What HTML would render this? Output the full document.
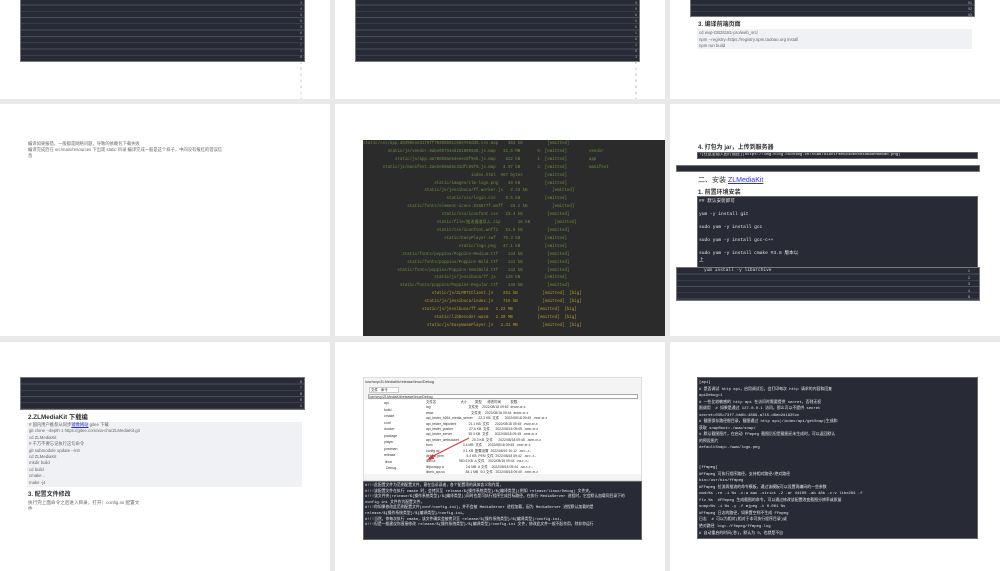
<!DOCTYPE html>
<html><head><meta charset="utf-8"><style>
*{margin:0;padding:0;box-sizing:border-box}
body{width:1000px;height:571px;background:#e9e9e9;position:relative;overflow:hidden;font-family:"Liberation Sans","Noto Sans CJK SC",sans-serif;color:#444}
.p{position:absolute;background:#fff;overflow:hidden}
.a{position:absolute}
.dk{position:absolute;background:#282a36;background-image:repeating-linear-gradient(to bottom,transparent 0 5.5px,#4a4d5e 5.5px 6.3px);border:1px solid #777}
.dk2{position:absolute;background:#282a36;border:1px solid #666;color:#e8e8e8;font-family:"Liberation Mono","Noto Sans CJK SC",monospace;font-size:4.6px;line-height:6.5px;padding:2px 1px;white-space:pre;overflow:hidden}
.h{font-weight:bold;color:#333;font-size:6px;white-space:nowrap}
.t{font-size:4.3px;color:#666;white-space:nowrap}
.ln{position:absolute;font-size:3.5px;color:#aaa;line-height:6px;text-align:right;width:14px}
.term{position:absolute;background:#2b2b2b;font-family:"Liberation Mono",monospace;font-size:4.1px;line-height:7.9px;color:#6a8f3c;white-space:pre;overflow:hidden;padding-top:1px}
.term .y{color:#b59a2c}
</style></head><body>

<!-- row 1 -->
<div class="p" style="left:0;top:0;width:330px;height:99px">
 <div class="dk" style="left:20px;top:-2px;width:285px;height:64px"></div>
 <div class="ln" style="left:288px;top:0">3<br>4<br>3<br>5<br>3<br>6<br>3<br>7<br>3<br>8<br>3<br>9<br>4<br>0<br>4<br>1<br>4</div>
</div>
<div class="p" style="left:335px;top:0;width:330px;height:99px">
 <div class="dk" style="left:20px;top:-2px;width:285px;height:64px"></div>
 <div class="ln" style="left:288px;top:0">5<br>9<br>6<br>0<br>6<br>1<br>6<br>2<br>6<br>3<br>6<br>4<br>6<br>5<br>6<br>6<br>6</div>
</div>
<div class="p" style="left:670px;top:0;width:330px;height:99px">
 <div class="dk" style="left:20px;top:-2px;width:285px;height:19px"></div>
 <div class="ln" style="left:288px;top:0;color:#bbb">91<br>92<br>93</div>
 <div class="a h" style="left:28px;top:19px">3. 编译前端页面</div>
 <div class="a" style="left:27px;top:29px;width:275px;height:20px;background:#f0f1f4"></div>
 <div class="a t" style="left:29px;top:30px;line-height:6.5px">cd wvp-GB28181-pro/web_src/<br>npm --registry=https://registry.npm.taobao.org install<br>npm run build</div>
</div>

<!-- row 2 -->
<div class="p" style="left:0;top:104px;width:330px;height:232px">
 <div class="a t" style="left:28px;top:37px;line-height:6px">编译如果报错，一般都是网络问题，导致的依赖包下载失败<br>编译完成后在 src/main/resources 下出现 static 目录 编译完成一般是这个样子，中间没有报红的错误信<br>息</div>
</div>
<div class="p" style="left:335px;top:104px;width:330px;height:232px">
 <div class="term" style="left:28px;top:36px;width:302px;height:197px">static/css/app.d8399ese3170ff70306b91c69e7e6dd5.css.map    383 kB          [emitted]
          static/js/vendor.9abe9b734ed251809936.js.map   11.6 MB       0  [emitted]         vendor
             static/js/app.aa786b9ae54eeec8f9eb.js.map    822 kB       1  [emitted]         app
        static/js/manifest.2ae2e69a85c33dfc65f0.js.map   4.97 kB       2  [emitted]         manifest
                                            index.html  967 bytes         [emitted]
                             static/images/zlm-logo.png    49 kB          [emitted]
                         static/js/jessibuca/ff.worker.js   2.43 kB          [emitted]
                                  static/css/login.css    8.5 kB          [emitted]
                  static/fonts/element-icons.535877f.woff   28.2 kB          [emitted]
                                static/css/iconfont.css   23.4 kB          [emitted]
                              static/file/推流通道导入.zip       18 kB          [emitted]
                              static/css/iconfont.woff2   51.8 kB          [emitted]
                                 static/EasyPlayer.swf   75.3 kB          [emitted]
                                       static/logo.png   47.1 kB          [emitted]
                static/fonts/poppins/Poppins-Medium.ttf    144 kB          [emitted]
                  static/fonts/poppins/Poppins-Bold.ttf    141 kB          [emitted]
              static/fonts/poppins/Poppins-SemiBold.ttf    142 kB          [emitted]
                             static/js/jessibuca/ff.js    125 kB          [emitted]
               static/fonts/poppins/Poppins-Regular.ttf    145 kB          [emitted]
<span class="y">                            static/js/ZLMRTCClient.js    251 kB          [emitted]  [big]
                         static/js/jessibuca/index.js    715 kB          [emitted]  [big]
                        static/js/jessibuca/ff.wasm   1.22 MB          [emitted]  [big]
                             static/libDecoder.wasm   2.39 MB          [emitted]  [big]
                          static/js/EasyWasmPlayer.js   2.31 MB          [emitted]  [big]</span></div>
</div>
<div class="p" style="left:670px;top:104px;width:330px;height:232px">
 <div class="a h" style="left:28px;top:38px">4. 打包为 jar，上传到服务器</div>
 <div class="dk2" style="left:27px;top:48px;width:281px;height:7px;padding:0 1px;line-height:5px;font-size:4px">![在这里插入图片描述](https://img-blog.csdnimg.cn/55ab7818c1fa05840ec804d6ab0686ab.png)</div>
 <div class="dk" style="left:6px;top:61px;width:304px;height:7px"></div>
 <div class="a h" style="left:28px;top:71px;font-weight:normal;font-size:7px">二、安装 <span style="color:#3030d0;text-decoration:underline">ZLMediaKit</span></div>
 <div class="a h" style="left:28px;top:83px">1. 前置环境安装</div>
 <div class="dk2" style="left:27px;top:92px;width:281px;height:72px;line-height:6.5px">## 默认安装即可

yum -y install git

sudo yum -y install gcc

sudo yum -y install gcc-c++

sudo yum -y install cmake #3.8 版本以
上
</div>
 <div class="dk" style="left:6px;top:163px;width:304px;height:34px"></div>
 <div class="a" style="left:34px;top:164px;font-family:'Liberation Mono',monospace;font-size:4.5px;color:#ddd">yum install -y libarchive</div>
 <div class="ln" style="left:286px;top:164px;line-height:6.6px;color:#ccc">1<br>2<br>3<br>4<br>5</div>
</div>

<!-- row 3 -->
<div class="p" style="left:0;top:342px;width:330px;height:229px">
 <div class="dk" style="left:20px;top:35px;width:285px;height:33px"></div>
 <div class="ln" style="left:288px;top:37px;color:#ccc">6<br>7<br>8<br>9<br>1</div>
 <div class="a h" style="left:28px;top:70px;font-size:6.3px">2.ZLMediaKit 下载编</div>
 <div class="a" style="left:27px;top:80px;width:275px;height:65px;background:#f0f1f4"></div>
 <div class="a t" style="left:29px;top:80px;line-height:6.4px"># 国内用户推荐从同步<span style="color:#3030d0;text-decoration:underline">镜像网站</span> gitee 下载<br>git clone --depth 1 https://gitee.com/xia-chu/ZLMediaKit.git<br>cd ZLMediaKit<br># 千万不要忘记执行这句命令<br>git submodule update --init<br>cd ZLMediaKit<br>mkdir build<br>cd build<br>cmake ..<br> make -j4</div>
 <div class="a h" style="left:28px;top:147px">3. 配置文件修改</div>
 <div class="a t" style="left:28px;top:158px;line-height:6px;font-size:4.6px">执行完上面命令之后进入目录，打开：config.ini 配置文<br>件</div>
</div>
<div class="p" style="left:335px;top:342px;width:330px;height:229px">
 <div class="a" style="left:28px;top:35px;width:279px;height:104px;background:#f4f4f4;border:1px solid #ddd;font-size:3.8px;color:#333;overflow:hidden">
  <div style="padding:2px 1px">/usr/wvp/ZLMediaKit/release/linux/Debug</div>
  <div style="margin:1px 5px;width:30px;height:6px;border:1px solid #ccc;background:#fff;font-size:3.5px">&nbsp;文件&nbsp;&nbsp;&nbsp;命令</div>
  <div style="margin:1px 4px;height:5px;background:#fff;border:1px solid #aaa;width:270px;font-size:3.5px">/usr/wvp/ZLMediaKit/release/linux/Debug</div>
  <div style="display:flex;margin-top:1px">
   <div style="width:58px;height:74px;background:#fff;line-height:6.5px;padding-left:20px;font-size:3.5px">api<br>build<br>cmake<br>conf<br>docker<br>package<br>player<br>postman<br>release<br>&nbsp;linux<br>&nbsp;&nbsp;Debug</div>
   <div style="flex:1;height:74px;background:#fff;line-height:5.4px;font-size:3.4px;padding-left:4px;white-space:pre">文件名                          大小        类型      修改时间          权限
log                                        文件夹    2022/08/18 09:52  drwxr-xr-x
www                                        文件夹    2022/08/18 09:44  drwxr-xr-x
api_tester_h264_media_server      22.3 KB  文件      2022/08/18 09:45  -rwxr-xr-x
api_tester_httpclient             21.1 KB  文件      2022/08/18 09:45  -rwxr-xr-x
api_tester_pusher                 27.6 KB  文件      2022/08/18 09:45  -rwxr-xr-x
api_tester_server                 35.3 KB  文件      2022/08/18 09:45  -rwxr-xr-x
api_tester_websocket              20.3 KB  文件      2022/08/18 09:45  -rwxr-xr-x
bom                                3.4 MB  文件      2022/08/18 09:45  -rwxr-xr-x
config.ini                         3.1 KB  配置设置  2022/08/19 10:12  -rw-r--r--
default.pem                        5.4 KB  PEM 文件  2022/08/18 09:42  -rw-r--r--
libflv.a                         950.5 KB  A 文件    2022/08/18 09:44  -rw-r--r--
libjsoncpp.a                       2.6 MB  A 文件    2022/08/18 09:44  -rw-r--r--
libmk_api.so                      84.1 MB  SO 文件   2022/08/18 09:45  -rwxr-xr-x</div>
  </div>
  <svg class="a" style="left:60px;top:58px" width="50" height="30"><line x1="45" y1="2" x2="5" y2="22" stroke="#d33" stroke-width="1"/><polygon points="3,24 9,18 10,23" fill="#d33"/></svg>
 </div>
 <div class="dk2" style="left:28px;top:139px;width:279px;height:59px;font-size:3.8px;line-height:5.6px;white-space:normal">#!!!此配置文件为范例配置文件，意在告诉读者，各个配置项的具体含义和作用，<br>#!!!该配置文件在执行 cmake 时，会拷贝至 release/${操作系统类型}/${编译类型}(例如 release/linux/Debug) 文件夹。<br>#!!!该文件夹(release/${操作系统类型}/${编译类型})同时也是可执行程序生成目标路径，在执行 MediaServer 进程时，它会默认加载同目录下的<br>config.ini 文件作为配置文件，<br>#!!!你如果修改此范例配置文件(conf/config.ini)，并不会被 MediaServer 进程加载，因为 MediaServer 进程默认加载的是<br>release/${操作系统类型}/${编译类型}/config.ini。<br>#!!!当然，你每次执行 cmake，该文件确实会被拷贝至 release/${操作系统类型}/${编译类型}/config.ini，<br>#!!!但是一般建议你直接修改 release/${操作系统类型}/${编译类型}/config.ini 文件，修改此文件一般不起作用，除非你运行</div>
</div>
<div class="p" style="left:670px;top:342px;width:330px;height:229px">
 <div class="dk2" style="left:27px;top:35px;width:281px;height:162px;font-size:3.9px;line-height:6.55px">[api]
# 是否调试 http api，启用调试后，会打印每次 http 请求的内容和回复
apiDebug=1
# 一些比较敏感的 http api 在访问时需要提供 secret，否则无权
限调用  # 如果是通过 127.0.0.1 访问，那么可以不提供 secret
secret=035c73f7-bb6b-4889-a715-d9eb2d1925cc
# 截图保存路径根目录，截图通过 http api(/index/api/getSnap)生成和
获取 snapRoot=./www/snap/
# 默认截图图片，在启动 FFmpeg 截图后但是截图还未生成时，可以返回默认
的预设图片
defaultSnap=./www/logo.png


[ffmpeg]
#FFmpeg 可执行程序路径，支持相对路径/绝对路径
bin=/usr/bin/ffmpeg
#FFmpeg 拉流再推流的命令模板，通过该模板可以设置再编码的一些参数
cmd=%s -re -i %s -c:a aac -strict -2 -ar 44100 -ab 48k -c:v libx264 -f
flv %s  #FFmpeg 生成截图的命令，可以通过修改该配置改变截图分辨率或质量
snap=%s -i %s -y -f mjpeg -t 0.001 %s
#FFmpeg 日志的路径，如果置空则不生成 FFmpeg
日志  # 可以为相对(相对于本可执行程序目录)或
绝对路径 log=./ffmpeg/ffmpeg.log
# 自动重启的时间(秒)，默认为 0，也就是不自
</div>
</div>
</body></html>
